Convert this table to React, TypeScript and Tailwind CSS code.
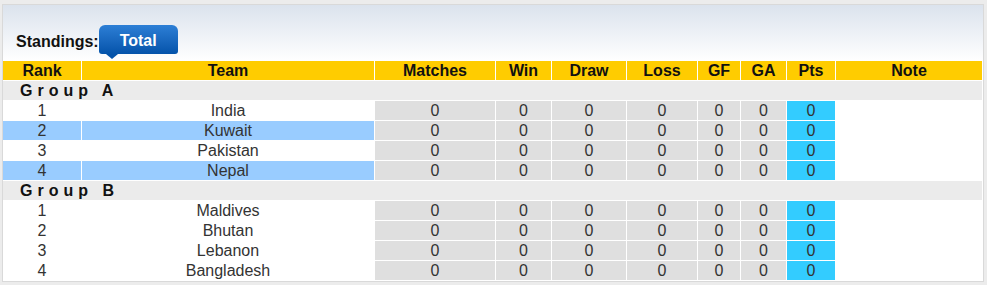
import React from 'react';

type Team = { rank: number; name: string; highlight?: boolean };
type Group = { label: string; teams: Team[] };

const groups: Group[] = [
    {
        label: 'Group A',
        teams: [
            { rank: 1, name: 'India' },
            { rank: 2, name: 'Kuwait', highlight: true },
            { rank: 3, name: 'Pakistan' },
            { rank: 4, name: 'Nepal', highlight: true },
        ],
    },
    {
        label: 'Group B',
        teams: [
            { rank: 1, name: 'Maldives' },
            { rank: 2, name: 'Bhutan' },
            { rank: 3, name: 'Lebanon' },
            { rank: 4, name: 'Bangladesh' },
        ],
    },
];

const columns = ['Rank', 'Team', 'Matches', 'Win', 'Draw', 'Loss', 'GF', 'GA', 'Pts', 'Note'];

const App: React.FC = () => {
    return (
        <div className="min-h-[285px] bg-[#ececec] pt-[4px] pl-[2px] font-['Liberation_Sans',Arial,sans-serif]">
            <div className="w-[982px] h-[278px] border border-[#d9d9d9] bg-white">
                {/* Title strip with tab */}
                <div className="h-[56px] flex items-end pl-[13px] bg-gradient-to-b from-[#dbe3ed] to-white">
                    <span className="mb-[10px] text-[16px] leading-[19px] font-bold text-[#111]">Standings:</span>
                    <div className="relative mb-[7px] w-[79px] h-[29px] rounded-t-[6px] rounded-b-[3px] bg-gradient-to-b from-[#2c7fd6] to-[#0453aa] flex items-center justify-center">
                        <span className="text-[16px] leading-[19px] font-bold text-white pt-[2px]">Total</span>
                        <span className="absolute left-[7px] -bottom-[5px] w-0 h-0 border-l-[6px] border-r-[6px] border-t-[5px] border-l-transparent border-r-transparent border-t-[#0453aa]" />
                    </div>
                </div>

                {/* Standings table */}
                <div className="grid grid-cols-[78px_292px_120px_55px_74px_70px_42px_45px_48px_146px] gap-px bg-white text-[16px] leading-[19px] text-center">
                    {columns.map((c) => (
                        <div key={c} className="bg-[#ffcc00] font-bold text-[#111] h-[19px]">{c}</div>
                    ))}
                    {groups.map((g) => (
                        <React.Fragment key={g.label}>
                            <div className="col-span-10 h-[19px] bg-[#ebebeb] text-left pl-[17px] font-bold text-[#111] tracking-[5px]">
                                {g.label}
                            </div>
                            {g.teams.map((t) => (
                                <React.Fragment key={t.name}>
                                    <div className={`h-[19px] text-[#333] ${t.highlight ? 'bg-[#99ccff]' : 'bg-white'}`}>{t.rank}</div>
                                    <div className={`h-[19px] text-[#333] ${t.highlight ? 'bg-[#99ccff]' : 'bg-white'}`}>{t.name}</div>
                                    {[0, 1, 2, 3, 4, 5].map((i) => (
                                        <div key={i} className="h-[19px] bg-[#dfdfdf] text-[#333]">0</div>
                                    ))}
                                    <div className="h-[19px] bg-[#33ccff] text-[#333]">0</div>
                                    <div className="h-[19px] bg-white" />
                                </React.Fragment>
                            ))}
                        </React.Fragment>
                    ))}
                </div>
            </div>
        </div>
    );
};

export default App;
